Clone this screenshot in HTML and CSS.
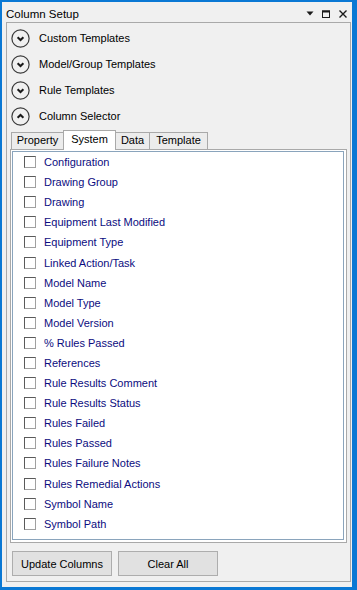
FILE: index.html
```html
<!DOCTYPE html>
<html lang="en">
<head>
  <meta charset="UTF-8" />
  <title>Column Setup</title>
  <link rel="stylesheet" href="styles.css">
</head>
<body>

  <div class="titlebar">
    <span class="title">Column Setup</span>
    <div class="controls">
      <svg width="8" height="5" viewBox="0 0 8 5"><polygon points="0.5,0.5 7.5,0.5 4,4.5" fill="#1a1a1a"/></svg>
      <svg width="9" height="8" viewBox="0 0 9 8"><rect x="0.5" y="1" width="7" height="6.5" fill="none" stroke="#1a1a1a" stroke-width="1"/><rect x="0" y="0.5" width="8" height="2" fill="#1a1a1a"/></svg>
      <svg width="8" height="8" viewBox="0 0 8 8"><path d="M0.5 0.5 L7.5 7.5 M7.5 0.5 L0.5 7.5" stroke="#1a1a1a" stroke-width="1.4"/></svg>
    </div>
  </div>

  <div class="panel">

    <div class="sections">
      <div class="section">
        <svg class="toggle" width="19" height="19" viewBox="0 0 19 19"><circle cx="9.5" cy="9.5" r="8.6" fill="none" stroke="#3a3a3a" stroke-width="1.2"/><path d="M6.6 8.2 L9.5 11 L12.4 8.2" fill="none" stroke="#1a1a1a" stroke-width="2"/></svg>
        <span>Custom Templates</span>
      </div>
      <div class="section">
        <svg class="toggle" width="19" height="19" viewBox="0 0 19 19"><circle cx="9.5" cy="9.5" r="8.6" fill="none" stroke="#3a3a3a" stroke-width="1.2"/><path d="M6.6 8.2 L9.5 11 L12.4 8.2" fill="none" stroke="#1a1a1a" stroke-width="2"/></svg>
        <span>Model/Group Templates</span>
      </div>
      <div class="section">
        <svg class="toggle" width="19" height="19" viewBox="0 0 19 19"><circle cx="9.5" cy="9.5" r="8.6" fill="none" stroke="#3a3a3a" stroke-width="1.2"/><path d="M6.6 8.2 L9.5 11 L12.4 8.2" fill="none" stroke="#1a1a1a" stroke-width="2"/></svg>
        <span>Rule Templates</span>
      </div>
      <div class="section">
        <svg class="toggle" width="19" height="19" viewBox="0 0 19 19"><circle cx="9.5" cy="9.5" r="8.6" fill="none" stroke="#3a3a3a" stroke-width="1.2"/><path d="M6.6 10.8 L9.5 8 L12.4 10.8" fill="none" stroke="#1a1a1a" stroke-width="2"/></svg>
        <span>Column Selector</span>
      </div>
    </div>

    <div class="tabs">
      <div class="tab tab-property">Property</div>
      <div class="tab tab-system active">System</div>
      <div class="tab tab-data">Data</div>
      <div class="tab tab-template">Template</div>
    </div>

    <div class="tab-page">
      <ul class="checklist">
        <li><span class="box"></span>Configuration</li>
        <li><span class="box"></span>Drawing Group</li>
        <li><span class="box"></span>Drawing</li>
        <li><span class="box"></span>Equipment Last Modified</li>
        <li><span class="box"></span>Equipment Type</li>
        <li><span class="box"></span>Linked Action/Task</li>
        <li><span class="box"></span>Model Name</li>
        <li><span class="box"></span>Model Type</li>
        <li><span class="box"></span>Model Version</li>
        <li><span class="box"></span>% Rules Passed</li>
        <li><span class="box"></span>References</li>
        <li><span class="box"></span>Rule Results Comment</li>
        <li><span class="box"></span>Rule Results Status</li>
        <li><span class="box"></span>Rules Failed</li>
        <li><span class="box"></span>Rules Passed</li>
        <li><span class="box"></span>Rules Failure Notes</li>
        <li><span class="box"></span>Rules Remedial Actions</li>
        <li><span class="box"></span>Symbol Name</li>
        <li><span class="box"></span>Symbol Path</li>
      </ul>
    </div>

    <div class="actions">
      <button type="button">Update Columns</button>
      <button type="button">Clear All</button>
    </div>

  </div>

</body>
</html>
```

FILE: styles.css
```css
:root {
  --accent: #0a78d4;
  --grey-line: #a9a9a9;
  --list-line: #8aa4bc;
}

* {
  box-sizing: border-box;
}

html, body {
  height: 100%;
  margin: 0;
}

body {
  background: #f0f0f0;
  border-style: solid;
  border-color: var(--accent);
  border-width: 2px 5px 3px 2px;
  font-family: "Liberation Sans", Arial, sans-serif;
  font-size: 11px;
  color: #000;
}

.titlebar {
  display: flex;
  align-items: center;
  height: 20px;
  padding: 3px 5px 0 4px;
}

.title {
  font-size: 11.5px;
  line-height: 16px;
}

.controls {
  margin-left: auto;
  display: flex;
  align-items: center;
  gap: 8px;
}

.controls svg {
  display: block;
}

.panel {
  height: 560px;
  margin: 0 1px 0 4px;
  border: 1px solid var(--grey-line);
}

.sections {
  padding-top: 2px;
}

.section {
  display: flex;
  align-items: center;
  height: 26px;
  padding-left: 4px;
}

.toggle {
  display: block;
  margin-right: 9px;
}

.tabs {
  position: relative;
  z-index: 1;
  display: flex;
  align-items: flex-end;
  height: 20px;
  padding-left: 4px;
}

.tab {
  height: 17px;
  margin-right: -1px;
  border: 1px solid var(--grey-line);
  border-bottom: none;
  background: #ececec;
  text-align: center;
  line-height: 15px;
}

.tab.active {
  height: 20px;
  margin-bottom: -1px;
  background: #fff;
  line-height: 17px;
}

.tab-property { width: 53px; }
.tab-system { width: 53px; }
.tab-data { width: 35px; }
.tab-template { width: 59px; }

.tab-page {
  height: 394px;
  margin: 0 3px;
  padding: 1px 2px 2px 1px;
  border: 1px solid var(--grey-line);
  background: #fff;
}

.checklist {
  list-style: none;
  margin: 0;
  padding: 0;
  height: 389px;
  border: 1px solid var(--list-line);
}

.checklist li {
  display: flex;
  align-items: center;
  height: 20.1px;
  padding-left: 11px;
  color: #0c0c80;
}

.box {
  width: 12px;
  height: 12px;
  margin-right: 8px;
  border: 1px solid;
  border-color: #5a5a5a #a0a0a0 #a0a0a0 #5a5a5a;
  background: #fff;
}

.actions {
  display: flex;
  gap: 6px;
  margin-top: 8px;
  padding-left: 5px;
}

.actions button {
  width: 100px;
  height: 25px;
  padding: 0;
  border: 1px solid #adadad;
  background: #e1e1e1;
  font-family: inherit;
  font-size: 11px;
  color: #000;
}
```
